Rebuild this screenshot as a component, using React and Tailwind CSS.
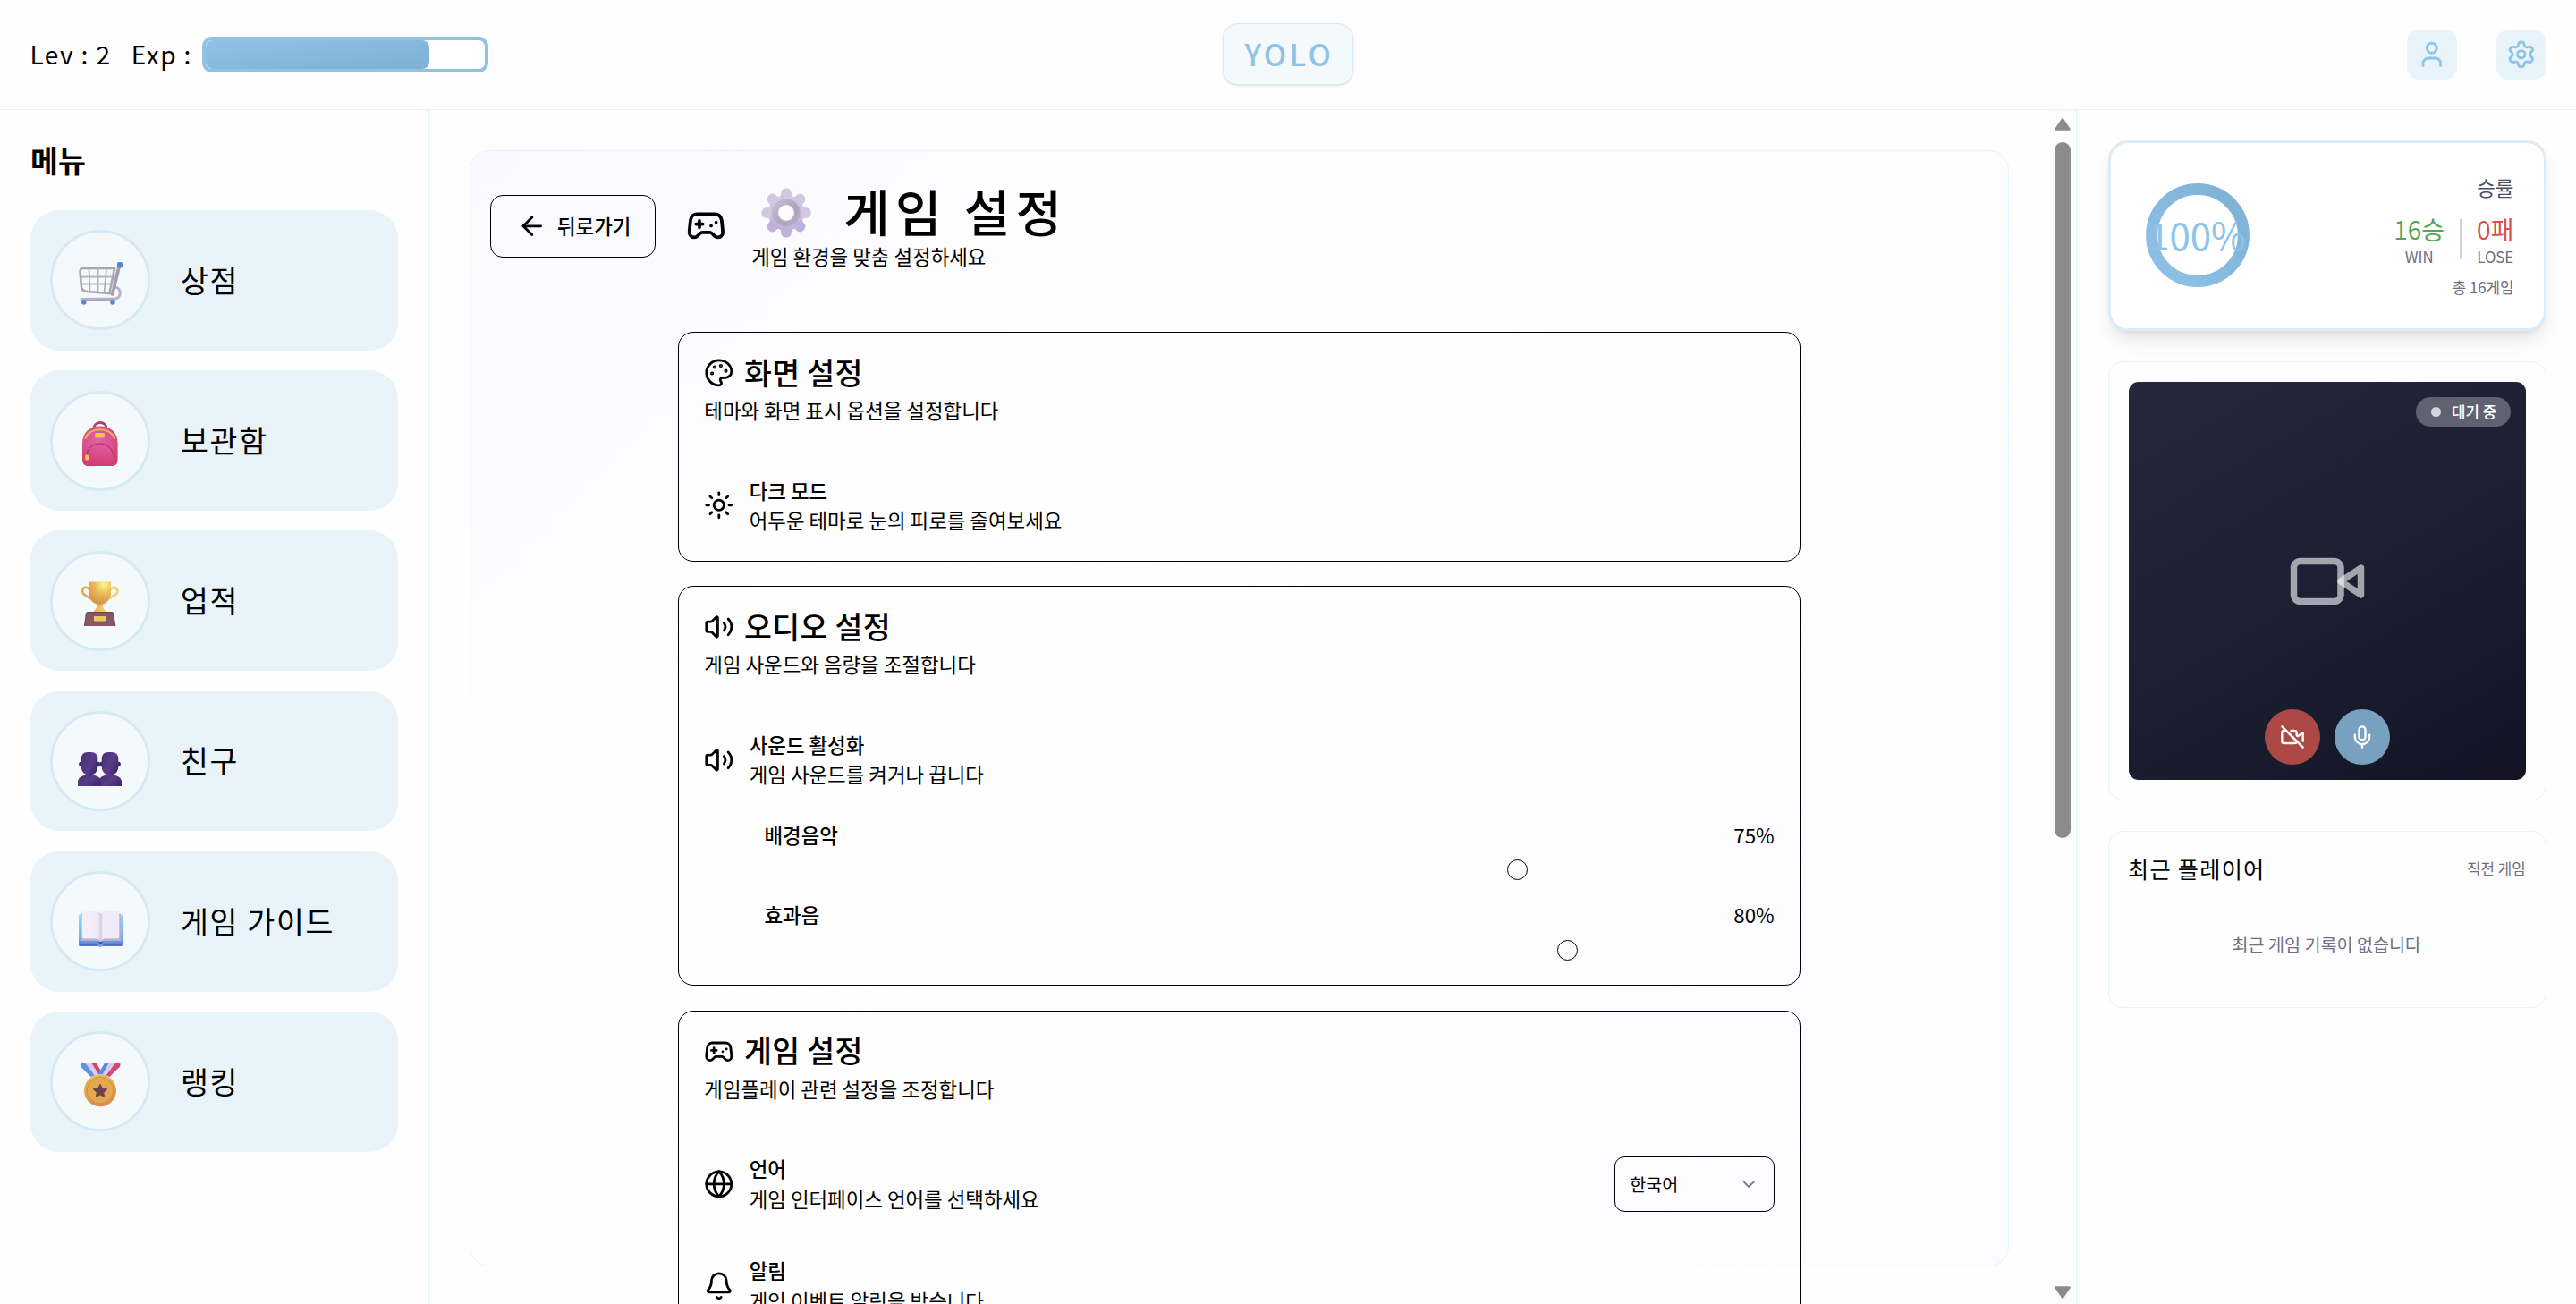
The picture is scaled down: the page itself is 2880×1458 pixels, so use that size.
import React from "react";
import {
  ArrowLeft,
  Gamepad2,
  Palette,
  Sun,
  Volume2,
  Globe,
  Bell,
  ChevronDown,
  User,
  Settings,
} from "lucide-react";

function CartIcon() {
  return (
    <svg viewBox="0 0 50 50" className="size-[50px]" fill="none">
      <path d="M42 30 C49 31 49 42 42 43 L4 43.4" stroke="#b9b1c6" strokeWidth="3" strokeLinecap="round" />
      <path d="M4 44.4 L40 44.4" stroke="#a99fc0" strokeWidth="1.4" strokeLinecap="round" />
      <path d="M2.5 13 Q2.5 9 6 9 L41 9 L35.5 37 L10 35 Q4.6 34.5 4 30 Z" stroke="#aaa4ae" strokeWidth="2.6" strokeLinejoin="round" />
      <path d="M3 18.5 H39 M3.6 26.5 H38 M12.5 9 L13.5 35 M22.5 9 V36 M32 9 L29.5 36" stroke="#b7b1bb" strokeWidth="1.8" />
      <path d="M46.5 5.5 L38.5 38" stroke="#a39da9" strokeWidth="3.8" strokeLinecap="round" />
      <path d="M43.5 7.5 L37 36" stroke="#d5d0da" strokeWidth="1" />
      <rect x="44" y="2" width="6" height="6.5" rx="2" fill="#5583d2" />
      <circle cx="6.8" cy="47" r="2.8" fill="#5b82d3" />
      <circle cx="39" cy="47" r="2.8" fill="#5b82d3" />
    </svg>
  );
}

function BackpackIcon() {
  return (
    <svg viewBox="0 0 50 50" className="size-[50px]" fill="none">
      <defs>
        <radialGradient id="bp" cx="0.45" cy="0.35" r="0.7">
          <stop offset="0" stopColor="#e065a6" />
          <stop offset="0.65" stopColor="#d64c8d" />
          <stop offset="1" stopColor="#cc4268" />
        </radialGradient>
        <linearGradient id="bpPocket" x1="0.6" y1="0" x2="0.4" y2="1">
          <stop offset="0" stopColor="#de5f9e" />
          <stop offset="1" stopColor="#d23a74" />
        </linearGradient>
      </defs>
      <path d="M17.5 9 C18 -1 32 -1 32.3 9" stroke="#ac4562" strokeWidth="2.8" />
      <path d="M5 25 C5 12 14 5.6 24.8 5.6 C35.6 5.6 44.6 12 44.6 25 V43 Q44.6 50 38 50 H11.5 Q5 50 5 43 Z" fill="url(#bp)" />
      <path d="M8.5 19 C14 6 35.5 6 41 19" stroke="#eeb54c" strokeWidth="2.2" strokeLinecap="round" />
      <rect x="19" y="13" width="11" height="5.4" rx="1.6" fill="#efc255" />
      <path d="M9.5 50 V41 C10 20 39.8 20 40.3 41 V50 Z" fill="url(#bpPocket)" />
      <path d="M9.5 39 C11.5 20 38.5 20 40.3 41" stroke="#a92d5d" strokeWidth="1" />
      <rect x="8.2" y="37.6" width="3.8" height="5.8" rx="1.2" fill="#efc255" />
    </svg>
  );
}

function TrophyIcon() {
  return (
    <svg viewBox="0 0 50 50" className="size-[50px]" fill="none">
      <defs>
        <radialGradient id="cup" cx="0.68" cy="0.12" r="0.85">
          <stop offset="0" stopColor="#fdf884" />
          <stop offset="0.5" stopColor="#e8b95a" />
          <stop offset="1" stopColor="#d8944c" />
        </radialGradient>
        <linearGradient id="foot" x1="0" y1="0" x2="1" y2="0">
          <stop offset="0" stopColor="#e2ab4d" />
          <stop offset="1" stopColor="#f4dc6c" />
        </linearGradient>
      </defs>
      <path d="M13 9 C8 4.5 4.5 8 5.3 12 C6 15.5 10.5 17 14.5 19" stroke="#dca653" strokeWidth="2.5" />
      <path d="M36.5 9 C41.5 4.5 45 8 44.2 12 C43.5 15.5 39 17 35 19" stroke="#f0cf60" strokeWidth="2.5" />
      <path d="M21.7 23 H28 C27.5 29 29 31 32 34.5 H17 C20.5 31 22 29 21.7 23 Z" fill="url(#foot)" />
      <path d="M12 0.5 H37 V13 C37 20 31.5 26 24.5 26 C17.5 26 12 20 12 13 Z" fill="url(#cup)" />
      <path d="M10.6 34 H38.5 Q39.7 34 40 35.5 L42.3 50 H7 L9 35.5 Q9.3 34 10.6 34 Z" fill="#875767" />
      <path d="M10.6 34.7 H38.8 M9.6 36 L7.6 50 M39.5 36 L41.7 50" stroke="#74434f" strokeWidth="1" />
      <rect x="18" y="39" width="13" height="5.4" rx="0.7" fill="#edc660" />
    </svg>
  );
}

function PeopleIcon() {
  return (
    <svg viewBox="0 0 50 50" className="size-[50px]" fill="none">
      <defs>
        <linearGradient id="bust" x1="0" y1="0" x2="1" y2="0.6">
          <stop offset="0" stopColor="#463071" />
          <stop offset="0.6" stopColor="#573c89" />
          <stop offset="1" stopColor="#452c70" />
        </linearGradient>
      </defs>
      <g transform="translate(23 0)">
        <ellipse cx="3.2" cy="25.5" rx="2" ry="2.8" fill="#3a2560" />
        <ellipse cx="22.8" cy="25.5" rx="2" ry="2.8" fill="#3a2560" />
        <path d="M3.7 20 Q3.7 12 11 12 H15 Q22.3 12 22.3 20 V28 C22.3 34 18 37.8 13 37.8 C8 37.8 3.7 34 3.7 28 Z" fill="url(#bust)" />
        <path d="M0.5 50.5 V44 Q1 38 13 36.8 Q25 38 26 44 V50.5 Z" fill="url(#bust)" />
      </g>
      <ellipse cx="3.2" cy="25.5" rx="2" ry="2.8" fill="#3a2560" />
      <ellipse cx="22.8" cy="25.5" rx="2" ry="2.8" fill="#3a2560" />
      <path d="M3.7 20 Q3.7 12 11 12 H15 Q22.3 12 22.3 20 V28 C22.3 34 18 37.8 13 37.8 C8 37.8 3.7 34 3.7 28 Z" fill="url(#bust)" />
      <path d="M0 50.5 V44 Q1 38 13 36.8 Q25 38 26 44 V50.5 Z" fill="url(#bust)" />
    </svg>
  );
}

function BookIcon() {
  return (
    <svg viewBox="0 0 50 51" className="h-[51px] w-[50px]" fill="none">
      <defs>
        <linearGradient id="cover" x1="0" y1="0" x2="0" y2="1">
          <stop offset="0" stopColor="#92dcfa" />
          <stop offset="0.8" stopColor="#70a9ea" />
          <stop offset="1" stopColor="#4f6fc6" />
        </linearGradient>
        <linearGradient id="leaf" x1="0" y1="0" x2="1" y2="0">
          <stop offset="0" stopColor="#f5f1fa" />
          <stop offset="0.85" stopColor="#eee9f7" />
          <stop offset="1" stopColor="#d8d0ea" />
        </linearGradient>
      </defs>
      <rect x="1" y="14.5" width="49" height="35.2" rx="1.8" fill="url(#cover)" />
      <path d="M1.5 49 H49.5" stroke="#4e6cc4" strokeWidth="1.5" />
      <path d="M22.5 46 H28 V49 Q25.3 53 22.5 49 Z" fill="#6ba2e8" />
      <path d="M3 15 Q3 13 5 13 L46 13 Q48 13 48 15 V44 H28 L25.3 45.5 L22.5 44 H3 Z" fill="#b9afcf" />
      <path d="M22.8 45 H28 Q25.3 50 22.8 45 Z" fill="#3f57a8" />
      <path d="M4.7 13 Q4.7 11 7 11 H20 Q25.3 11 25.3 14.5 V44 Q24 41.5 20 41.5 H6.5 Q4.7 41.5 4.7 39.5 Z" fill="url(#leaf)" />
      <path d="M25.5 14.5 Q25.5 11 31 11 H44 Q46.3 11 46.3 13 V39.5 Q46.3 41.5 44.5 41.5 H31 Q27 41.5 25.5 44 Z" fill="#efeaf8" />
      <path d="M26.3 14 V42" stroke="#d6cee8" strokeWidth="1.6" />
    </svg>
  );
}

function MedalIcon() {
  return (
    <svg viewBox="0 0 50 51" className="h-[51px] w-[50px]" fill="none">
      <defs>
        <linearGradient id="disc" x1="0" y1="0" x2="0.2" y2="1">
          <stop offset="0" stopColor="#e8c24f" />
          <stop offset="0.6" stopColor="#e0a24c" />
          <stop offset="1" stopColor="#e08a4e" />
        </linearGradient>
      </defs>
      <path d="M4 1 H8 L21 14.5 L14.5 17 L3.5 6 Q2 2.5 4 1 Z" fill="#5e93e4" />
      <path d="M8 1 H15 L24 13.5 L19 16 Z" fill="#dccbee" />
      <path d="M15 1 H20.5 L27 12.5 L23.5 14.5 Z" fill="#d5456b" />
      <path d="M46 1 H42 L29.5 14.5 L35.5 17 L46.5 6 Q48.5 2.5 46 1 Z" fill="#d9487f" />
      <path d="M42 1 H46 Q48.5 2.5 46.5 6 L44.5 8 L39 4.5 Z" fill="#da4a5c" />
      <path d="M42.5 1 H35 L26 14 L31.5 15.5 Z" fill="#dccbee" />
      <path d="M35 1 H30.5 L22.5 13.5 L27.5 14.5 Z" fill="#5c8ce0" />
      <circle cx="25" cy="32.3" r="18" fill="url(#disc)" />
      <circle cx="25" cy="32" r="14.8" fill="#e3a850" stroke="#c98f42" strokeWidth="0.9" />
      <path
        d="M25 25.5 L27.200 30 L32.300 30.700 L28.600 34.200 L29.500 39.200 L25 36.800 L20.500 39.200 L21.400 34.200 L17.700 30.700 L22.800 30 Z"
        fill="#6d4350"
        stroke="#6d4350"
        strokeWidth="1.2"
        strokeLinejoin="round"
      />
    </svg>
  );
}

function GearIcon() {
  const angles = [0, 45, 90, 135, 180, 225, 270, 315];
  return (
    <svg viewBox="-28 -28 56 56" className="mt-[4px] size-[56px] shrink-0" fill="none">
      <defs>
        <linearGradient id="gearBody" x1="0" y1="-28" x2="0" y2="28" gradientUnits="userSpaceOnUse">
          <stop offset="0" stopColor="#d8d1e5" />
          <stop offset="0.5" stopColor="#cabfe0" />
          <stop offset="1" stopColor="#bfaedd" />
        </linearGradient>
        <linearGradient id="gearRing" x1="0" y1="0" x2="1" y2="1">
          <stop offset="0" stopColor="#c4becd" />
          <stop offset="0.6" stopColor="#ada5b7" />
          <stop offset="1" stopColor="#b8accc" />
        </linearGradient>
      </defs>
      <path
        fillRule="evenodd"
        fill="url(#gearBody)"
        d="M-20 0 A20 20 0 1 0 20 0 A20 20 0 1 0 -20 0 Z M-9 0 A9 9 0 1 1 9 0 A9 9 0 1 1 -9 0 Z"
      />
      {angles.map((a) => (
        <path
          key={a}
          transform={`rotate(${a})`}
          d="M-6.500 -17 L-5.500 -24 Q-4.500 -27.500 0 -27.500 Q4.500 -27.500 5.500 -24 L6.500 -17 Z"
          fill={a > 100 && a < 260 ? "#c0b0de" : "#d0c7e2"}
        />
      ))}
      <circle r="12.3" stroke="url(#gearRing)" strokeWidth="6.4" />
      <circle r="15.2" stroke="#b9b0c9" strokeWidth="0.7" />
    </svg>
  );
}

const menu = [
  { label: "상점", Icon: CartIcon },
  { label: "보관함", Icon: BackpackIcon },
  { label: "업적", Icon: TrophyIcon },
  { label: "친구", Icon: PeopleIcon },
  { label: "게임 가이드", Icon: BookIcon },
  { label: "랭킹", Icon: MedalIcon },
];

function Header() {
  return (
    <header className="flex h-[123px] shrink-0 items-center justify-between border-b border-[#e4f2fc] pb-px pl-[33.6px] pr-[33px]">
      <div className="flex flex-1 items-center text-[28px] tracking-[1.4px]">
        <span className="mr-[22.5px] pb-[2px] leading-[38px]">Lev : 2</span>
        <span className="mr-[11.5px] pb-[2px] leading-[38px]">Exp :</span>
        <div className="h-10 w-80 rounded-[11px] border-4 border-[#90c2e5] bg-white">
          <div className="h-full w-4/5 rounded-[8px] bg-linear-to-br from-[#90c2e7] to-[#7eb0d4]" />
        </div>
      </div>
      <div className="flex h-[69px] w-[146px] items-center justify-center rounded-[17px] border border-[#d6eaf5] bg-[#f4f9fc] pb-px pl-[2px] text-[33.6px] font-medium leading-none tracking-[3.36px] text-[#90c2e5] shadow-sm">
        YOLO
      </div>
      <div className="flex flex-1 justify-end gap-[44px]">
        <div className="grid size-[56px] place-items-center rounded-[14px] bg-[#e8f3fa] text-[#8fc3e7]">
          <User size={33.6} />
        </div>
        <div className="grid size-[56px] place-items-center rounded-[14px] bg-[#e8f3fa] text-[#8fc3e7]">
          <Settings size={33.6} />
        </div>
      </div>
    </header>
  );
}

function Sidebar() {
  return (
    <aside className="flex w-[480px] shrink-0 flex-col border-r border-[#e8f3fb] px-[34px] pt-[33px]">
      <h2 className="text-[33.6px] font-bold leading-[45px]">메뉴</h2>
      <nav className="mt-[34px] flex flex-col gap-[22.4px]">
        {menu.map(({ label, Icon }) => (
          <div key={label} className="flex h-[156.8px] items-center gap-[33.6px] rounded-[32px] bg-[#e8f3fa] px-[22.4px]">
            <div className="grid size-[112px] place-items-center rounded-full border-[3px] border-[#d6eaf5] bg-[#f4f9fc] pt-[6px]">
              <Icon />
            </div>
            <span className="pb-[2px] text-[33.6px] leading-[45px] tracking-[1.68px]">{label}</span>
          </div>
        ))}
      </nav>
    </aside>
  );
}

function SettingsCard({ Icon, title, desc, children }) {
  return (
    <section className="rounded-[17px] border border-black p-7">
      <div className="flex items-center gap-[11.2px]">
        <Icon size={33.6} />
        <h3 className="-mt-[3px] text-[33.6px] font-medium leading-[33.6px] tracking-[0.3px]">{title}</h3>
      </div>
      <p className="mt-[8.4px] leading-[33.6px]">{desc}</p>
      <div className="mt-[56px]">{children}</div>
    </section>
  );
}

function SettingRow({ Icon, title, desc, children }) {
  return (
    <div className="flex items-center">
      <Icon size={33.6} />
      <div className="ml-[16.8px] flex-1">
        <div className="font-medium leading-[33.6px]">{title}</div>
        <div className="leading-[33.6px]">{desc}</div>
      </div>
      {children}
    </div>
  );
}

function VolumeRow({ label, value, offset }) {
  return (
    <div>
      <div className="flex justify-between leading-[33.6px]">
        <span className="font-medium">{label}</span>
        <span>{value}%</span>
      </div>
      <div className="mt-[11.2px] flex h-[22.4px]">
        <div style={{ width: offset }} />
        <div className="size-[23px] rounded-full border border-black" />
      </div>
    </div>
  );
}

function Main() {
  return (
    <main className="h-full w-[1811px] shrink-0 px-[45px] pt-[45px]">
      <div className="h-[1248px] rounded-[22px] border border-[#e6f3fc] bg-linear-135 from-[#f9f9ff] via-[#fefefe] via-30% to-[#fcfcff] px-[22.4px] pt-[32px]">
        <div className="flex h-[103px] items-center">
          <div className="flex h-[70px] w-[185px] items-center rounded-[14px] border border-black pl-[29px]">
            <ArrowLeft size={33.6} />
            <span className="ml-[11px] font-medium leading-[33.6px]">뒤로가기</span>
          </div>
          <Gamepad2 size={44.8} className="ml-[34px]" />
          <div className="ml-[28px]">
            <div className="flex h-[69px] items-center pl-[11px]">
              <GearIcon />
              <h1 className="-mt-[2px] ml-[36px] text-[56px] font-medium leading-[67px] tracking-[6.3px]">게임 설정</h1>
            </div>
            <p className="leading-[33.6px]">게임 환경을 맞춤 설정하세요</p>
          </div>
        </div>
        <div className="mx-auto mt-[67px] flex w-[1254.4px] flex-col gap-[27.5px]">
          <SettingsCard Icon={Palette} title="화면 설정" desc="테마와 화면 표시 옵션을 설정합니다">
            <SettingRow Icon={Sun} title="다크 모드" desc="어두운 테마로 눈의 피로를 줄여보세요" />
          </SettingsCard>
          <SettingsCard Icon={Volume2} title="오디오 설정" desc="게임 사운드와 음량을 조절합니다">
            <SettingRow Icon={Volume2} title="사운드 활성화" desc="게임 사운드를 켜거나 끕니다" />
            <div className="mt-[33.6px] flex flex-col gap-[22.4px] pl-[67.2px]">
              <VolumeRow label="배경음악" value={75} offset={830.5} />
              <VolumeRow label="효과음" value={80} offset={886.5} />
            </div>
          </SettingsCard>
          <SettingsCard Icon={Gamepad2} title="게임 설정" desc="게임플레이 관련 설정을 조정합니다">
            <SettingRow Icon={Globe} title="언어" desc="게임 인터페이스 언어를 선택하세요">
              <div className="flex h-[61.6px] w-[179.2px] items-center justify-between rounded-[11px] border border-black pl-[16.8px] pr-[16.8px] text-[19.6px]">
                <span>한국어</span>
                <ChevronDown size={22.4} className="opacity-50" />
              </div>
            </SettingRow>
            <div className="mt-[46.5px]">
              <SettingRow Icon={Bell} title="알림" desc="게임 이벤트 알림을 받습니다" />
            </div>
          </SettingsCard>
        </div>
      </div>
    </main>
  );
}

function Scrollbar() {
  return (
    <div className="flex w-[30px] shrink-0 flex-col items-center bg-[#fcfcfc] pt-[9px] pb-[6px]">
      <svg viewBox="0 0 18 14" className="h-[14px] w-[18px] shrink-0">
        <path d="M9 1.5 L16.5 12.5 H1.5 Z" fill="#8b8b8b" stroke="#8b8b8b" strokeWidth="2.5" strokeLinejoin="round" />
      </svg>
      <div className="mt-[13px] h-[778px] w-[18px] rounded-full bg-[#8b8b8b]" />
      <svg viewBox="0 0 18 14" className="mt-auto h-[14px] w-[18px] shrink-0">
        <path d="M9 12.5 L16.5 1.5 H1.5 Z" fill="#8b8b8b" stroke="#8b8b8b" strokeWidth="2.5" strokeLinejoin="round" />
      </svg>
    </div>
  );
}

function WinRate() {
  return (
    <div className="flex h-[213px] items-center justify-between rounded-[22px] border-[3px] border-[#daecf8] bg-white pb-[2px] pl-[38.5px] pr-[33.6px] shadow-[0_14px_21px_-4px_rgba(0,0,0,0.1),0_5px_8px_-5px_rgba(0,0,0,0.1)]">
      <div className="grid size-[116px] place-items-center">
        <svg viewBox="0 0 116 116" className="col-start-1 row-start-1 size-[116px]" fill="none">
          <defs>
            <linearGradient id="ring" x1="0" y1="1" x2="1" y2="0">
              <stop offset="0" stopColor="#90c2e7" />
              <stop offset="1" stopColor="#7eb0d4" />
            </linearGradient>
          </defs>
          <circle cx="58" cy="58" r="51.4" stroke="url(#ring)" strokeWidth="13" />
        </svg>
        <span className="col-start-1 row-start-1 pb-px text-[42px] leading-none text-[#8ec3ea]">100%</span>
      </div>
      <div className="flex flex-col items-end text-[16.8px] text-[#6b6f80]">
        <span className="text-[22.4px] leading-[33.6px] text-[#4b4f63]">승률</span>
        <div className="mt-[11px] flex items-center gap-[17px]">
          <div className="flex flex-col items-center">
            <span className="text-[28px] leading-[39px] text-[#55a556]">16승</span>
            <span className="leading-[22px]">WIN</span>
          </div>
          <div className="h-[45px] w-[2px] bg-[#d1d5db]" />
          <div className="flex flex-col items-center">
            <span className="text-[28px] leading-[39px] text-[#d9504b]">0패</span>
            <span className="leading-[22px]">LOSE</span>
          </div>
        </div>
        <span className="mt-[12px] leading-[22px]">총 16게임</span>
      </div>
    </div>
  );
}

function Camera() {
  return (
    <div className="mt-[34px] rounded-[17px] border border-[#e8f3fb] p-[22px]">
      <div className="flex h-[445px] flex-col rounded-[11px] bg-linear-[150deg] from-[#23293a] via-[#1a2031] via-55% to-[#131324]">
        <div className="mt-[17px] mr-[17px] flex h-[33px] w-[106px] items-center self-end rounded-full bg-[#5f6271] pl-[17px] text-[16.8px] font-medium leading-none text-white">
          <span className="mr-[12px] size-[11px] rounded-full bg-[#d1d5db]" />
          대기 중
        </div>
        <svg
          viewBox="0 0 24 24"
          className="mt-[127.5px] size-[90px] self-center"
          fill="none"
          stroke="#ffffff"
          strokeOpacity="0.6"
          strokeWidth="2"
          strokeLinecap="round"
          strokeLinejoin="round"
        >
          <path d="m22 8-6 4 6 4V8Z" />
          <rect width="14" height="12" x="2" y="6" rx="2" ry="2" />
        </svg>
        <div className="mt-auto mb-[17px] flex justify-center gap-[16px] text-white">
          <div className="grid size-[61.6px] place-items-center rounded-full bg-[#ac4845]">
            <svg viewBox="0 0 24 24" className="size-[28px]" fill="none" stroke="currentColor" strokeWidth="2" strokeLinecap="round" strokeLinejoin="round">
              <path d="M10.66 6H14a2 2 0 0 1 2 2v2.34l1 1L22 8v8" />
              <path d="M16 16a2 2 0 0 1-2 2H4a2 2 0 0 1-2-2V8a2 2 0 0 1 2-2h2l10 10Z" />
              <path d="M2 2 22 22" />
            </svg>
          </div>
          <div className="grid size-[61.6px] place-items-center rounded-full bg-[#78a1c0]">
            <svg viewBox="0 0 24 24" className="size-[28px]" fill="none" stroke="currentColor" strokeWidth="2" strokeLinecap="round" strokeLinejoin="round">
              <path d="M12 2a3 3 0 0 0-3 3v7a3 3 0 0 0 6 0V5a3 3 0 0 0-3-3Z" />
              <path d="M19 10v2a7 7 0 0 1-14 0v-2" />
              <path d="M12 19v3" />
            </svg>
          </div>
        </div>
      </div>
    </div>
  );
}

function RecentPlayers() {
  return (
    <div className="mt-[34px] h-[198px] rounded-[17px] border border-[#e8f3fb] pl-[21px] pr-[22.4px] pt-[22.4px] text-[#6f7080]">
      <div className="flex items-center justify-between">
        <h3 className="text-[25.2px] leading-[39px] tracking-[1.26px] text-black">최근 플레이어</h3>
        <span className="text-[16.8px]">직전 게임</span>
      </div>
      <p className="mt-[51px] text-center text-[19.6px] leading-[28px]">최근 게임 기록이 없습니다</p>
    </div>
  );
}

export default function App() {
  return (
    <div className="flex h-[1458px] w-[2880px] flex-col overflow-hidden bg-[#fefefe] font-['Noto_Sans_CJK_KR',sans-serif] text-[22.4px] text-black">
      <Header />
      <div className="flex h-[1335px]">
        <Sidebar />
        <Main />
        <Scrollbar />
        <aside className="flex-1 border-l border-[#e4f2fc] pl-[35px] pr-[33px] pt-[34px]">
          <WinRate />
          <Camera />
          <RecentPlayers />
        </aside>
      </div>
    </div>
  );
}
